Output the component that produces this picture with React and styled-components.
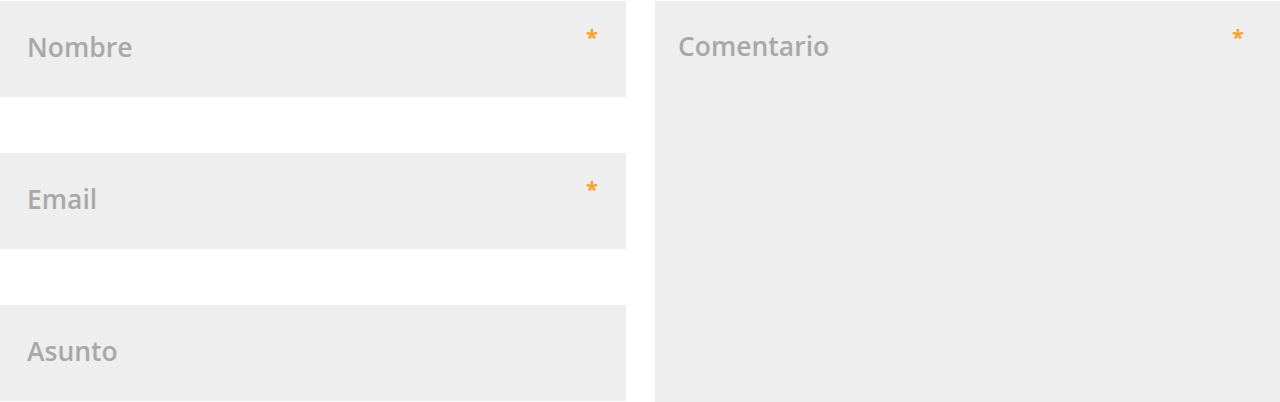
import React from 'react'
import styled, { createGlobalStyle } from 'styled-components'

const GlobalStyle = createGlobalStyle`
  body {
    margin: 0;
    background: #fff;
    font-family: "Open Sans", "Liberation Sans", sans-serif;
  }
`

export const Form = styled.form`
  display: grid;
  grid-template-columns: 626px 1fr;
  column-gap: 29px;
  padding-top: 1px;
  height: 401px;
`
export const Column = styled.div`
  display: flex;
  flex-direction: column;
  gap: 56px;
`
export const Field = styled.div`
  position: relative;
  height: ${(p) => (p.$tall ? '401px' : '96px')};
  background-color: #eeeeee;
`
const fieldText = `
  width: 100%;
  height: 100%;
  box-sizing: border-box;
  border: none;
  outline: none;
  background: transparent;
  font-family: "Open Sans", "Liberation Sans", sans-serif;
  font-weight: 600;
  font-size: 26.5px;
  color: #555;
  &::placeholder {
    color: #a8a8a8;
    opacity: 1;
  }
`
export const Input = styled.input`
  ${fieldText}
  padding: 0 60px 5px 27px;
`
export const TextArea = styled.textarea`
  ${fieldText}
  resize: none;
  padding: 28px 60px 0 23px;
  line-height: 34px;
`
export const Required = styled.span`
  position: absolute;
  top: 25px;
  right: ${(p) => p.$right || '28px'};
  color: #f5a233;
  font-weight: 700;
  font-size: 22px;
  line-height: 21px;
  pointer-events: none;
`

const App = () => {
  return (
    <>
      <GlobalStyle />
      <Form>
        <Column>
          <Field>
            <Input name='nombre' type='text' placeholder='Nombre' />
            <Required>*</Required>
          </Field>
          <Field>
            <Input name='email' type='email' placeholder='Email' />
            <Required>*</Required>
          </Field>
          <Field>
            <Input name='asunto' type='text' placeholder='Asunto' />
          </Field>
        </Column>
        <Field $tall>
          <TextArea name='comentario' placeholder='Comentario' />
          <Required $right='36px'>*</Required>
        </Field>
      </Form>
    </>
  )
}

export default App
